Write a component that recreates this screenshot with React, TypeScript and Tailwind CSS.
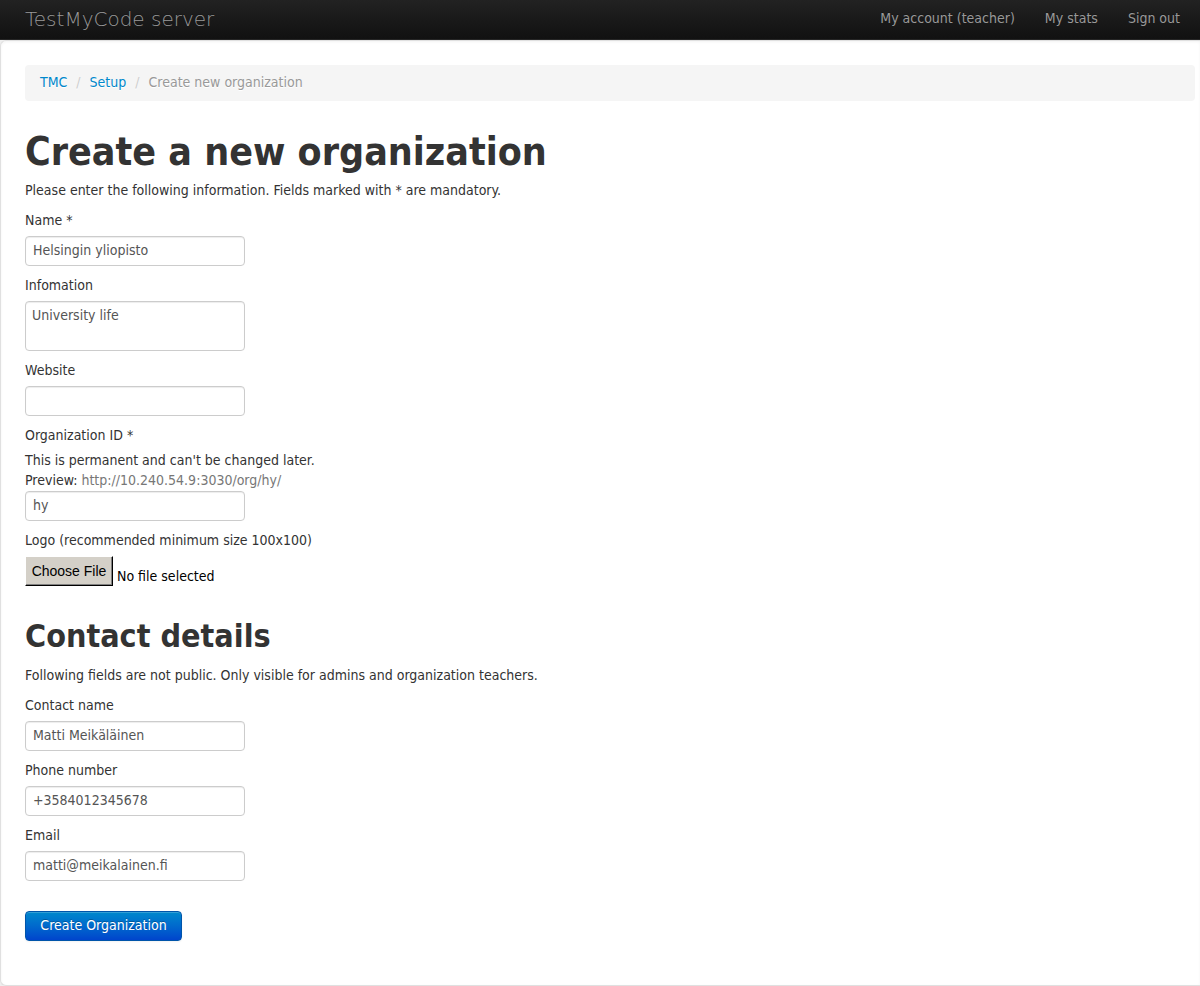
import React from "react";

const fieldClass =
  "mt-px block w-[220px] rounded-[4px] border border-[#cccccc] bg-white text-[14px] leading-[20px] text-[#555555] shadow-[inset_0_1px_1px_rgba(0,0,0,0.075)] outline-none focus:border-[#52a8ec]";

type FieldProps = {
  id: string;
  label: string;
  value?: string;
  type?: string;
  children?: React.ReactNode;
};

function Field({ id, label, value = "", type = "text", children }: FieldProps) {
  return (
    <div className="flex flex-col pb-[9px]">
      <label htmlFor={id} className="mb-[5px] self-start">
        {label}
      </label>
      {children}
      <input id={id} name={id} type={type} defaultValue={value} className={`${fieldClass} h-[30px] px-[7px] pt-[3px] pb-[5px]`} />
    </div>
  );
}

function Navbar() {
  const links = ["My account (teacher)", "My stats", "Sign out"];
  return (
    <header className="flex h-10 items-start justify-between border-b border-[#252525] bg-linear-to-b from-[#222222] to-[#111111] pr-5 pl-[25px] text-[#999999] [text-shadow:0_-1px_0_rgba(0,0,0,0.25)]">
      <a href="#" className="pt-[9px] font-['DejaVu_Sans'] text-[20px] leading-[20px] font-extralight">
        TestMyCode server
      </a>
      <nav className="flex gap-[30px] pt-2">
        {links.map((link) => (
          <a key={link} href="#" className="hover:text-white">
            {link}
          </a>
        ))}
      </nav>
    </header>
  );
}

function Breadcrumb() {
  return (
    <nav aria-label="Breadcrumb" className="rounded-[4px] bg-[#f5f5f5] px-[15px] pt-[7px] pb-[9px] [text-shadow:0_1px_0_#ffffff]">
      <ol className="flex">
        <li>
          <a href="#" className="text-[#0088cc]">TMC</a>
          <span className="px-[9px] text-[#cccccc]">/</span>
        </li>
        <li>
          <a href="#" className="text-[#0088cc]">Setup</a>
          <span className="px-[9px] text-[#cccccc]">/</span>
        </li>
        <li className="text-[#999999]">Create new organization</li>
      </ol>
    </nav>
  );
}

export default function App() {
  return (
    <div className="bg-[#eeeeee] font-['DejaVu_Sans_Condensed','DejaVu_Sans',sans-serif] text-[14px] leading-[20px] text-[#333333]">
      <Navbar />
      <main className="rounded-l-[6px] border-y border-l border-[#e0e0e0] bg-white pt-6 pr-[5px] pb-11 pl-6 shadow-[inset_0_1px_3px_rgba(0,0,0,0.05)]">
        <Breadcrumb />
        <form onSubmit={(event) => event.preventDefault()}>
          <h1 className="mt-[31px] mb-2 text-[39px] leading-[40px] font-bold">Create a new organization</h1>
          <p className="mb-2.5">Please enter the following information. Fields marked with * are mandatory.</p>

          <Field id="name" label="Name *" value="Helsingin yliopisto" />

          <div className="flex flex-col pb-[9px]">
            <label htmlFor="information" className="mb-[5px] self-start">
              Infomation
            </label>
            <textarea
              id="information"
              name="information"
              rows={2}
              defaultValue="University life"
              className={`${fieldClass} h-[50px] resize-none px-[6px] pt-[3px] pb-[5px]`}
            />
          </div>

          <Field id="website" label="Website" />

          <Field id="slug" label="Organization ID *" value="hy">
            <p>This is permanent and can't be changed later.</p>
            <p>
              Preview: <span className="text-[#777777]">http://10.240.54.9:3030/org/hy/</span>
            </p>
          </Field>

          <div className="mb-[30px] flex flex-col">
            <label htmlFor="logo" className="mb-[6px] self-start">
              Logo (recommended minimum size 100x100)
            </label>
            <div className="relative flex items-end gap-1 text-black">
              <input id="logo" name="logo" type="file" className="peer sr-only" />
              <label
                htmlFor="logo"
                className="flex h-[30px] w-[88px] items-center justify-center border border-t-white border-r-black border-b-black border-l-white bg-[#d4d0c8] font-['Liberation_Sans',sans-serif] text-[14px] whitespace-nowrap shadow-[inset_-1px_-1px_0_#808080]"
              >
                Choose File
              </label>
              <span>No file selected</span>
            </div>
          </div>

          <h2 className="mb-[9px] text-[32px] leading-[40px] font-bold">Contact details</h2>
          <p className="mb-2.5">Following fields are not public. Only visible for admins and organization teachers.</p>

          <Field id="contact_name" label="Contact name" value="Matti Meikäläinen" />
          <Field id="phone" label="Phone number" type="tel" value="+3584012345678" />
          <Field id="email" label="Email" type="email" value="matti@meikalainen.fi" />

          <button
            type="submit"
            className="mt-[21px] block h-[30px] min-w-[157px] rounded-[4px] border border-[#0055aa] bg-linear-to-b from-[#0088cc] to-[#0044cc] px-3 pb-[2px] text-white shadow-[inset_0_1px_0_rgba(255,255,255,0.2),0_1px_2px_rgba(0,0,0,0.05)] [text-shadow:0_-1px_0_rgba(0,0,0,0.25)]"
          >
            Create Organization
          </button>
        </form>
      </main>
    </div>
  );
}
